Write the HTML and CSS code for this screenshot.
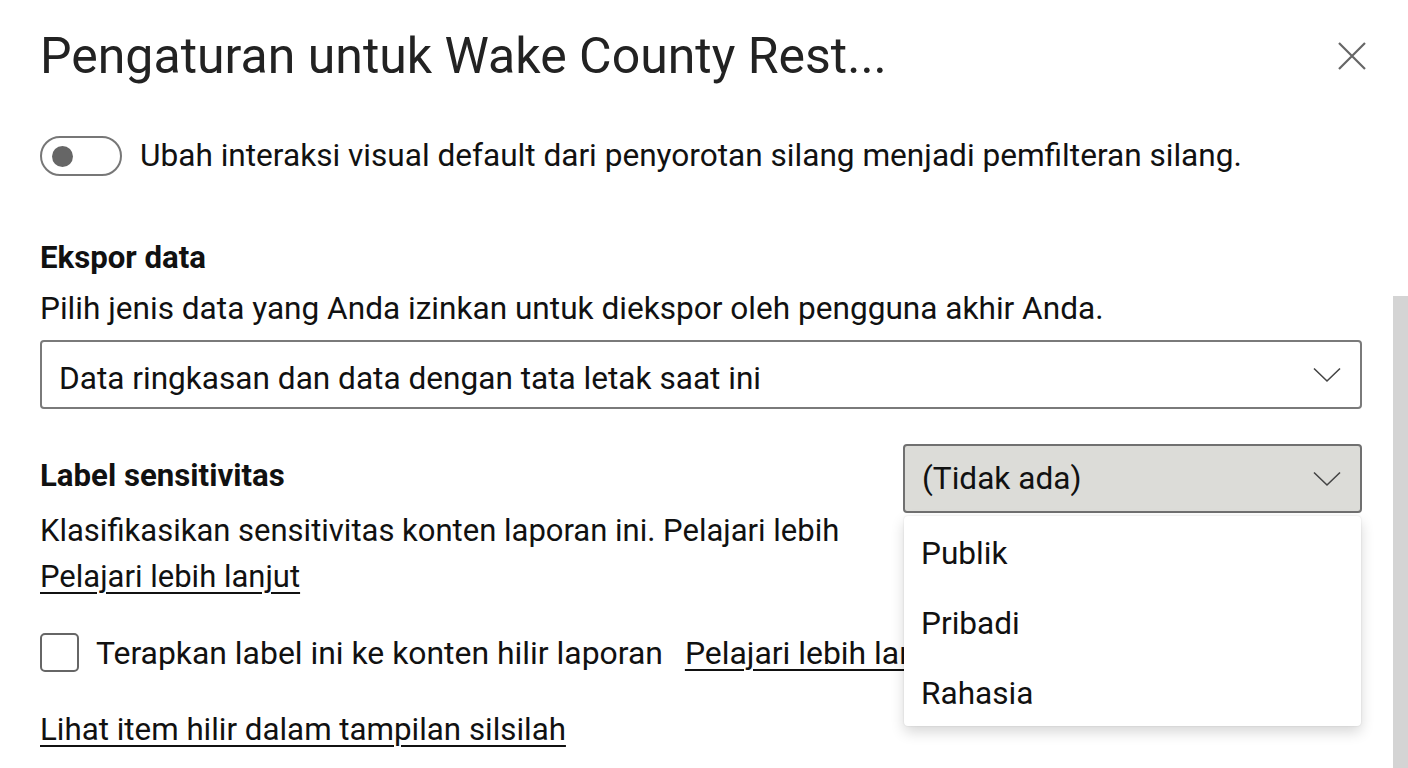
FILE: index.html
```html
<!DOCTYPE html>
<html lang="id">
<head>
<meta charset="utf-8">
<title>Pengaturan</title>
<link rel="stylesheet" href="styles.css">
</head>
<body>
<div class="panel">
  <header class="header">
    <h1 class="title">Pengaturan untuk Wake County Rest...</h1>
    <button class="close" aria-label="Tutup">
      <svg width="30" height="30" viewBox="0 0 30 30"><path d="M2 2 L28 28 M28 2 L2 28" stroke="#666" stroke-width="2.2" fill="none"/></svg>
    </button>
  </header>

  <div class="toggle-row">
    <span class="toggle"><span class="knob"></span></span>
    <span class="text">Ubah interaksi visual default dari penyorotan silang menjadi pemfilteran silang.</span>
  </div>

  <section class="export">
    <h2 class="heading">Ekspor data</h2>
    <p class="text">Pilih jenis data yang Anda izinkan untuk diekspor oleh pengguna akhir Anda.</p>
    <div class="select">
      <span class="text">Data ringkasan dan data dengan tata letak saat ini</span>
      <svg class="chev" width="28" height="16" viewBox="0 0 28 16"><path d="M1 1.5 L14 14 L27 1.5" stroke="#444" stroke-width="1.6" fill="none"/></svg>
    </div>
  </section>

  <section class="sens">
    <div class="sens-left">
      <h2 class="heading">Label sensitivitas</h2>
      <p class="text desc">Klasifikasikan sensitivitas konten laporan ini. Pelajari lebih<br><a class="link" href="#">Pelajari lebih lanjut</a></p>
    </div>
    <div class="sens-right">
      <div class="select select-open">
        <span class="text">(Tidak ada)</span>
        <svg class="chev" width="28" height="16" viewBox="0 0 28 16"><path d="M1 1.5 L14 14 L27 1.5" stroke="#444" stroke-width="1.6" fill="none"/></svg>
      </div>
      <ul class="menu">
        <li class="item">Publik</li>
        <li class="item">Pribadi</li>
        <li class="item">Rahasia</li>
      </ul>
    </div>
  </section>

  <div class="check-row">
    <span class="checkbox"></span>
    <span class="text">Terapkan label ini ke konten hilir laporan</span>
    <a class="link text" href="#">Pelajari lebih lanjut</a>
  </div>

  <div class="lineage">
    <a class="link text" href="#">Lihat item hilir dalam tampilan silsilah</a>
  </div>
</div>
<div class="scrollbar"></div>
</body>
</html>
```

FILE: styles.css
```css
html, body {
  margin: 0;
  padding: 0;
  background: #ffffff;
  height: 100%;
  overflow: hidden;
}
body {
  font-family: Roboto, "Noto Sans", sans-serif;
  color: #111111;
  position: relative;
}
.panel {
  padding: 0 46px 0 40px;
}
.header {
  display: flex;
  align-items: center;
  justify-content: space-between;
  margin-top: 24px;
  height: 64px;
}
.title {
  margin: 0;
  font-size: 50px;
  font-weight: 400;
  color: #222222;
  line-height: 64px;
  white-space: nowrap;
}
.close {
  border: 0;
  background: none;
  padding: 0;
  margin-right: -5px;
  width: 30px;
  height: 30px;
  display: flex;
}
.text {
  font-size: 31.6px;
  line-height: 40px;
}
.toggle-row {
  display: flex;
  align-items: center;
  gap: 18px;
  margin-top: 48px;
  height: 40px;
}
.toggle {
  box-sizing: border-box;
  width: 82px;
  height: 40px;
  border: 2px solid #777777;
  border-radius: 20px;
  display: flex;
  align-items: center;
  padding-left: 10px;
}
.knob {
  width: 21px;
  height: 21px;
  border-radius: 50%;
  background: #666666;
}
.heading {
  margin: 0;
  font-size: 31.2px;
  font-weight: 700;
  line-height: 46px;
}
.export {
  margin-top: 59px;
}
.export .text {
  margin: 8px 0 0;
}
.select {
  box-sizing: border-box;
  height: 69px;
  border: 2px solid #7a7a7a;
  border-radius: 4px;
  display: flex;
  align-items: center;
  justify-content: space-between;
  padding: 0 19px 0 17px;
  margin-top: 11px;
}
.chev {
  display: block;
}
.sens {
  display: flex;
  justify-content: space-between;
  margin-top: 35px;
}
.sens-left {
  padding-top: 9px;
}
.desc {
  margin: 9px 0 0;
  line-height: 46px;
  font-size: 31px;
}
.check-row .text {
  font-size: 31.9px;
}
.lineage .text {
  font-size: 31.3px;
}
.link {
  color: #111111;
  text-decoration: underline;
  text-decoration-thickness: 1.5px;
  text-underline-offset: 5px;
}
.sens-right {
  width: 459px;
  position: relative;
}
.select-open {
  margin-top: 0;
  background: #dcdcd8;
  border-color: #707070;
}
.menu {
  position: absolute;
  top: 72px;
  left: 1px;
  right: 1px;
  margin: 0;
  padding: 0;
  list-style: none;
  background: #ffffff;
  border-radius: 4px;
  box-shadow: 0 6px 14px rgba(0, 0, 0, 0.16), 0 0 2px rgba(0, 0, 0, 0.12);
  z-index: 5;
}
.item {
  height: 70px;
  line-height: 76px;
  font-size: 31.6px;
  padding-left: 17px;
}
.check-row {
  display: flex;
  align-items: center;
  margin-top: 33px;
  height: 39px;
}
.checkbox {
  box-sizing: border-box;
  width: 39px;
  height: 39px;
  border: 2px solid #666666;
  border-radius: 5px;
  margin-right: 17px;
  flex: none;
}
.check-row .link {
  margin-left: 22px;
  white-space: nowrap;
}
.lineage {
  margin-top: 38px;
}
.scrollbar {
  position: absolute;
  top: 296px;
  right: 0;
  bottom: 0;
  width: 15px;
  background: #d4d4d4;
}
```
